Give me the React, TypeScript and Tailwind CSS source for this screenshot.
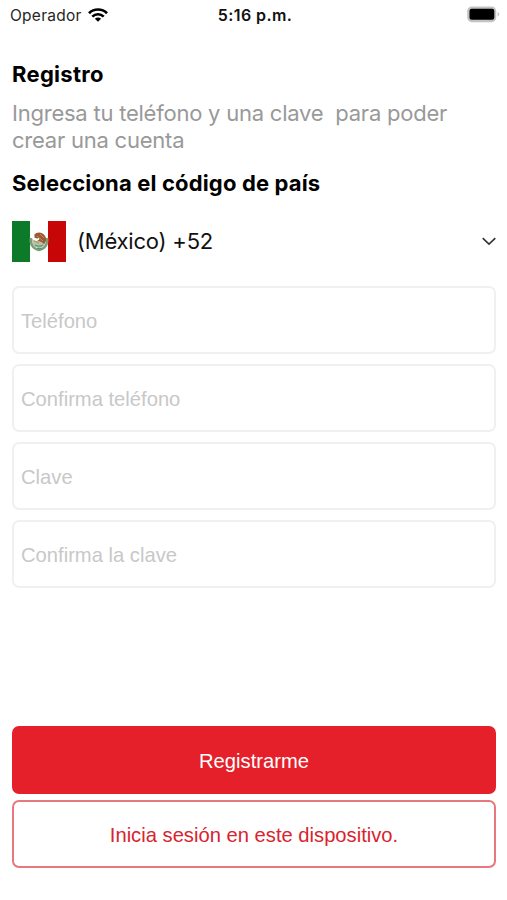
const fields = ['Teléfono', 'Confirma teléfono', 'Clave', 'Confirma la clave'];

function WifiIcon() {
  return (
    <svg className="mb-[3px] ml-[6px] h-[14px] w-[20px]" viewBox="0 0 20 14" fill="none" stroke="#000" strokeWidth="2.7">
      <path d="M1 5.2a12.8 12.8 0 0 1 18 0" />
      <path d="M4.3 8.6a8.1 8.1 0 0 1 11.4 0" />
      <path d="M10 13.8 6.9 10.7a4.4 4.4 0 0 1 6.2 0Z" fill="#000" stroke="none" />
    </svg>
  );
}

function BatteryIcon() {
  return (
    <svg className="mb-[4px] h-[17px] w-[33px]" viewBox="0 0 33 17">
      <rect x="0.2" y="0.4" width="29" height="15.800" rx="4.600" fill="#c2c2c2" />
      <rect x="2.500" y="2.8" width="24.800" height="11" rx="2.200" fill="#000" />
      <path d="M30.600 6v4.500c1.100-.4 1.600-1.200 1.600-2.200S31.700 6.400 30.600 6Z" fill="#c2c2c2" />
    </svg>
  );
}

function MexicoFlag() {
  return (
    <svg className="h-[41px] w-[54px]" viewBox="0 0 54 41">
      <rect width="54" height="41" fill="#fff" />
      <rect width="18" height="41" fill="#0d7a2a" />
      <rect x="36" width="18" height="41" fill="#c60607" />
      <path d="M19 17c-1 6 2 11 8 12 6-1 9-6 8-12" fill="none" stroke="#7f9d75" strokeWidth="2.600" />
      <path d="M20 18c0 6 3 9 7 9s7-3 7-9c-4 3-9 3-14 0Z" fill="#b9c4a6" />
      <path d="M22 14c3-4 9-3 11 1 2 3 1 6-1 8-2-2-4-3-7-3 2-1 3-2 2-3-2 1-4 0-5-1 1-1 1-1 0-2Z" fill="#9a5a32" />
      <path d="m25 15 6 5M22 20l5 2M28 13l4 4" stroke="#c08a62" strokeWidth="1" />
      <path d="M23 24c2 1 5 2 8 0M25 27.500h5" stroke="#4f9a82" strokeWidth="1.300" fill="none" />
    </svg>
  );
}

export default function App() {
  return (
    <main className="flex h-[900px] w-[507px] flex-col bg-white font-['Inter','Liberation_Sans',sans-serif] text-black">
      <header className="grid h-[32px] grid-cols-3 items-center pr-[7px] pl-[10px]">
        <div className="flex items-center text-[15.5px] tracking-[0.250px] text-[#262626]">
          <span>Operador</span>
          <WifiIcon />
        </div>
        <div className="pb-[2px] text-center text-[16px] font-semibold tracking-[0.400px] text-[#111]">5:16 p.m.</div>
        <div className="flex justify-end">
          <BatteryIcon />
        </div>
      </header>

      <section className="flex flex-col pr-[11px] pl-[12px]">
        <h1 className="mt-[28px] text-[22px] leading-[28px] font-bold tracking-[0.300px]">Registro</h1>
        <p className="mt-[12px] text-[22px] leading-[27px] tracking-[-0.230px] whitespace-pre text-[#999]">
          {'Ingresa tu teléfono y una clave  para poder\ncrear una cuenta'}
        </p>
        <h2 className="mt-[15px] text-[22px] leading-[28px] font-bold tracking-[0.150px]">Selecciona el código de país</h2>

        <button className="mt-[24px] flex h-[41px] items-center text-left text-[22px] tracking-[-0.220px] text-[#111]">
          <MexicoFlag />
          <span className="ml-[11px]">(México) +52</span>
          <svg className="ml-auto h-[9px] w-[14px]" viewBox="0 0 14 9" fill="none" stroke="#333" strokeWidth="1.600">
            <path d="m0.700 1.200 6.300 6 6.300-6" />
          </svg>
        </button>

        <form className="mt-[24px] flex flex-col gap-[10px]">
          {fields.map((label) => (
            <input
              key={label}
              placeholder={label}
              className="h-[68px] w-full rounded-[7px] border-2 border-[#f0f0f0] bg-white px-[7px] pt-[2px] font-['Liberation_Sans',Arial,sans-serif] text-[20.200px] outline-none placeholder:text-[#c8c8c8]"
            />
          ))}
        </form>
      </section>

      <footer className="mt-[138px] flex flex-col gap-[6px] pr-[11px] pl-[12px] font-['Liberation_Sans',Arial,sans-serif] text-[20.200px]">
        <button className="h-[68px] rounded-[7px] bg-[#e5202b] pt-[2px] text-white">Registrarme</button>
        <button className="h-[68px] rounded-[7px] border-2 border-[#e8777e] bg-white pt-[2px] text-[#d9232e]">
          Inicia sesión en este dispositivo.
        </button>
      </footer>
    </main>
  );
}
